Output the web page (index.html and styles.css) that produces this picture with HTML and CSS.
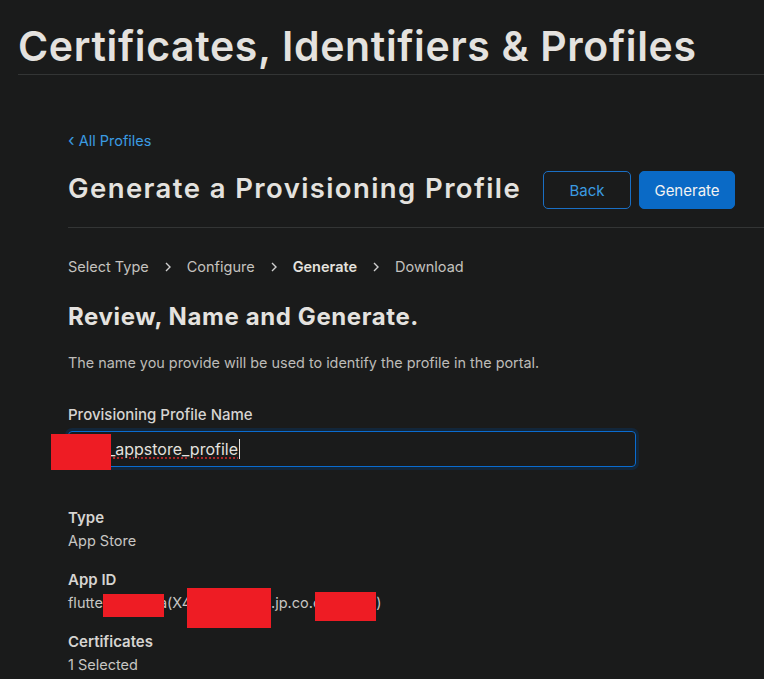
FILE: index.html
```html
<!DOCTYPE html>
<html lang="en">
<head>
<meta charset="utf-8">
<link rel="stylesheet" href="styles.css">
</head>
<body>
<header class="top">
  <h1 class="top-title">Certificates, Identifiers &amp; Profiles</h1>
</header>
<main class="content">
  <a class="back-link" href="#"><span class="chev-left">‹</span> All Profiles</a>
  <div class="head-row">
    <h2 class="page-title">Generate a Provisioning Profile</h2>
    <div class="actions">
      <button class="btn btn-outline">Back</button>
      <button class="btn btn-primary">Generate</button>
    </div>
  </div>
  <nav class="steps">
    <span class="step">Select Type</span>
    <span class="sep"><svg width="8" height="12" viewBox="0 0 8 12"><path d="M2 2l4 4-4 4" fill="none" stroke="#cfcfcf" stroke-width="1.4"/></svg></span>
    <span class="step">Configure</span>
    <span class="sep"><svg width="8" height="12" viewBox="0 0 8 12"><path d="M2 2l4 4-4 4" fill="none" stroke="#cfcfcf" stroke-width="1.4"/></svg></span>
    <span class="step step-current">Generate</span>
    <span class="sep"><svg width="8" height="12" viewBox="0 0 8 12"><path d="M2 2l4 4-4 4" fill="none" stroke="#cfcfcf" stroke-width="1.4"/></svg></span>
    <span class="step">Download</span>
  </nav>
  <h3 class="section-title">Review, Name and Generate.</h3>
  <p class="desc">The name you provide will be used to identify the profile in the portal.</p>
  <label class="field-label">Provisioning Profile Name</label>
  <div class="input">
    <span class="input-text"><span class="typed">xxxx_appstore_profile</span><span class="caret"></span></span>
    <span class="redact redact-input"></span>
  </div>
  <dl class="details">
    <div class="item">
      <dt>Type</dt>
      <dd>App Store</dd>
    </div>
    <div class="item">
      <dt>App ID</dt>
      <dd class="appid">flutte<span class="blot b1"></span>a(X4<span class="blot b2"></span>.jp.co.c<span class="blot b3"></span>)</dd>
    </div>
    <div class="item">
      <dt>Certificates</dt>
      <dd>1 Selected</dd>
    </div>
  </dl>
</main>
</body>
</html>
```
FILE: styles.css
```css
html, body {
  margin: 0;
  padding: 0;
  background: #1a1b1b;
  font-family: Inter, "Noto Sans", sans-serif;
  color: #e4e2df;
  overflow: hidden;
}
.top {
  padding: 18px 0 0 18px;
}
.top-title {
  margin: 0;
  font-size: 41px;
  font-weight: 600;
  line-height: 56px;
  letter-spacing: 0.65px;
  color: #e4e2df;
  border-bottom: 1px solid #333535;
}
.content {
  padding: 56px 0 0 68px;
}
.back-link {
  display: block;
  color: #3b9be2;
  text-decoration: none;
  font-size: 14.5px;
  line-height: 18px;
}
.chev-left {
  font-size: 17px;
}
.head-row {
  display: flex;
  align-items: center;
  justify-content: space-between;
  padding: 21px 29px 18px 0;
  border-bottom: 1px solid #333535;
}
.page-title {
  margin: 0 0 4px;
  font-size: 27.5px;
  font-weight: 600;
  letter-spacing: 1.4px;
  line-height: 33px;
  color: #e4e2df;
}
.actions {
  display: flex;
  gap: 8px;
}
.btn {
  font-family: inherit;
  font-size: 15px;
  height: 38px;
  border-radius: 5px;
  cursor: pointer;
}
.btn-outline {
  width: 88px;
  background: transparent;
  border: 1px solid #1a6fc4;
  color: #3b9be2;
}
.btn-primary {
  width: 96px;
  background: #0a6ac6;
  border: 1px solid #0a6ac6;
  color: #f2f2f2;
}
.steps {
  display: flex;
  align-items: center;
  gap: 15px;
  margin-top: 30px;
  font-size: 14.5px;
  color: #c4c2bf;
}
.sep {
  display: flex;
  align-items: center;
}
.step-current {
  font-weight: 600;
  color: #e4e2df;
}
.section-title {
  margin: 27px 0 0;
  font-size: 24px;
  font-weight: 700;
  letter-spacing: 0.6px;
  color: #e4e2df;
}
.desc {
  margin: 23px 0 0;
  font-size: 14.4px;
  color: #bdbbb8;
}
.field-label {
  display: block;
  margin-top: 34px;
  font-size: 15px;
  font-weight: 500;
  color: #d6d4d1;
}
.input {
  position: relative;
  box-sizing: border-box;
  margin-top: 7px;
  width: 568px;
  height: 36px;
  border: 1.5px solid #0a6cd0;
  border-radius: 4px;
  box-shadow: 0 0 0 3px #12263a;
  display: flex;
  align-items: center;
  padding-left: 4px;
}
.input-text {
  display: flex;
  align-items: center;
  font-size: 16px;
  color: #e4e2df;
}
.typed {
  text-decoration: underline dotted #d02b2b;
  text-underline-offset: 3px;
}
.caret {
  display: inline-block;
  width: 1px;
  height: 20px;
  background: #e4e2df;
  margin-left: 1px;
}
.redact {
  position: absolute;
  background: #ee1c24;
}
.redact-input {
  left: -18px;
  top: 2px;
  width: 60px;
  height: 36px;
}
.details {
  margin: 41px 0 0;
}
.item {
  margin-bottom: 19px;
}
.item dt {
  font-size: 15px;
  font-weight: 600;
  color: #d6d4d1;
  line-height: 20px;
}
.item dd {
  margin: 3px 0 0;
  font-size: 14.5px;
  color: #c8c6c3;
  line-height: 20px;
}
.blot {
  display: inline-block;
  background: #ee1c24;
  vertical-align: middle;
  position: relative;
}
.b1 { width: 61px; height: 23px; margin: -8px -5px -8px 0; top: 1px; }
.b2 { width: 84px; height: 40px; margin: -14px 0 -14px -4px; top: 4px; }
.b3 { width: 61px; height: 29px; margin: -10px 0 -10px -6px; top: 2px; }
```
